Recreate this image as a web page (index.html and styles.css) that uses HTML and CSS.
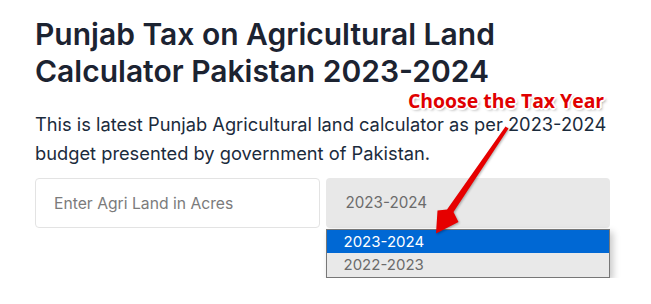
FILE: index.html
```html
<!DOCTYPE html>
<html lang="en">
<head>
    <meta charset="UTF-8">
    <meta name="viewport" content="width=device-width, initial-scale=1.0">
    <title>Punjab Tax on Agricultural Land Calculator</title>
    <link rel="stylesheet" href="styles.css">
</head>
<body>
    <div class="container">
        <h2 class="title">Punjab Tax on Agricultural Land Calculator Pakistan 2023-2024</h2>
        <p class="intro">This is latest Punjab Agricultural land calculator as per 2023-2024 budget presented by government of Pakistan.</p>

        <div class="form-row">
            <input type="text" class="field" placeholder="Enter Agri Land in Acres">
            <div class="select-wrap">
                <div class="select">2023-2024</div>
                <ul class="options">
                    <li class="option selected">2023-2024</li>
                    <li class="option">2022-2023</li>
                </ul>
            </div>
        </div>
    </div>

    <!-- screenshot annotation -->
    <div class="note">Choose the Tax Year</div>
    <svg class="arrow" width="651" height="304" viewBox="0 0 651 304">
        <polygon points="505.5,126.5 508.5,128.5 453.5,212 458.5,222 436,233.5 437.5,210.5 447,209.5" fill="#e60000"/>
    </svg>
</body>
</html>
```

FILE: styles.css
```css
body {
    margin: 0;
    background-color: #fff;
    font-family: Inter, "Open Sans", sans-serif;
}

.container {
    width: 575px;
    padding: 16px 0 0 35px;
}

.title {
    margin: 0;
    font-size: 30px;
    font-weight: 600;
    line-height: 37px;
    color: #1c2331;
}

.intro {
    margin: 19.5px 0 10.5px;
    font-size: 18.3px;
    line-height: 29px;
    color: #1b2b3c;
}

.form-row {
    display: grid;
    grid-template-columns: 1fr 1fr;
    gap: 6px;
    align-items: start;
}

.field {
    width: 100%;
    height: 50px;
    padding: 0 18px;
    border: 1px solid #e3e3e3;
    border-radius: 4px;
    font-family: Inter, sans-serif;
    font-size: 15.7px;
    box-sizing: border-box;
}

.field::placeholder {
    color: #7b7b7b;
}

.select {
    height: 50px;
    padding: 0 20px;
    border-radius: 4px;
    background-color: #e8e8e8;
    color: #6b6b6b;
    font-size: 15.2px;
    line-height: 50px;
}

.options {
    margin: 1px 0 0;
    padding: 0;
    list-style: none;
    border: 1px solid #777;
    background-color: #e9e9e9;
    box-shadow: 3px 3px 7px rgba(0, 0, 0, 0.22);
}

.option {
    height: 24px;
    padding: 0 17px;
    font-size: 15px;
    line-height: 24px;
    color: #6b6b6b;
}

.option.selected {
    height: 23px;
    line-height: 23px;
    background-color: #0068d4;
    color: #fff;
}

.note {
    position: absolute;
    left: 408px;
    top: 88px;
    font-family: "Open Sans", sans-serif;
    font-weight: bold;
    font-size: 19.4px;
    line-height: 26px;
    color: #e00000;
    text-shadow: -2px 0 #fff, 2px 0 #fff, 0 -2px #fff, 0 2px #fff,
        -1px -1px #fff, 1px 1px #fff, -1px 1px #fff, 1px -1px #fff,
        2px 2px 3px rgba(0, 0, 0, 0.4);
}

.arrow {
    position: absolute;
    left: 0;
    top: 0;
    pointer-events: none;
    filter: drop-shadow(1px 1px 1px rgba(0, 0, 0, 0.3));
}
```
